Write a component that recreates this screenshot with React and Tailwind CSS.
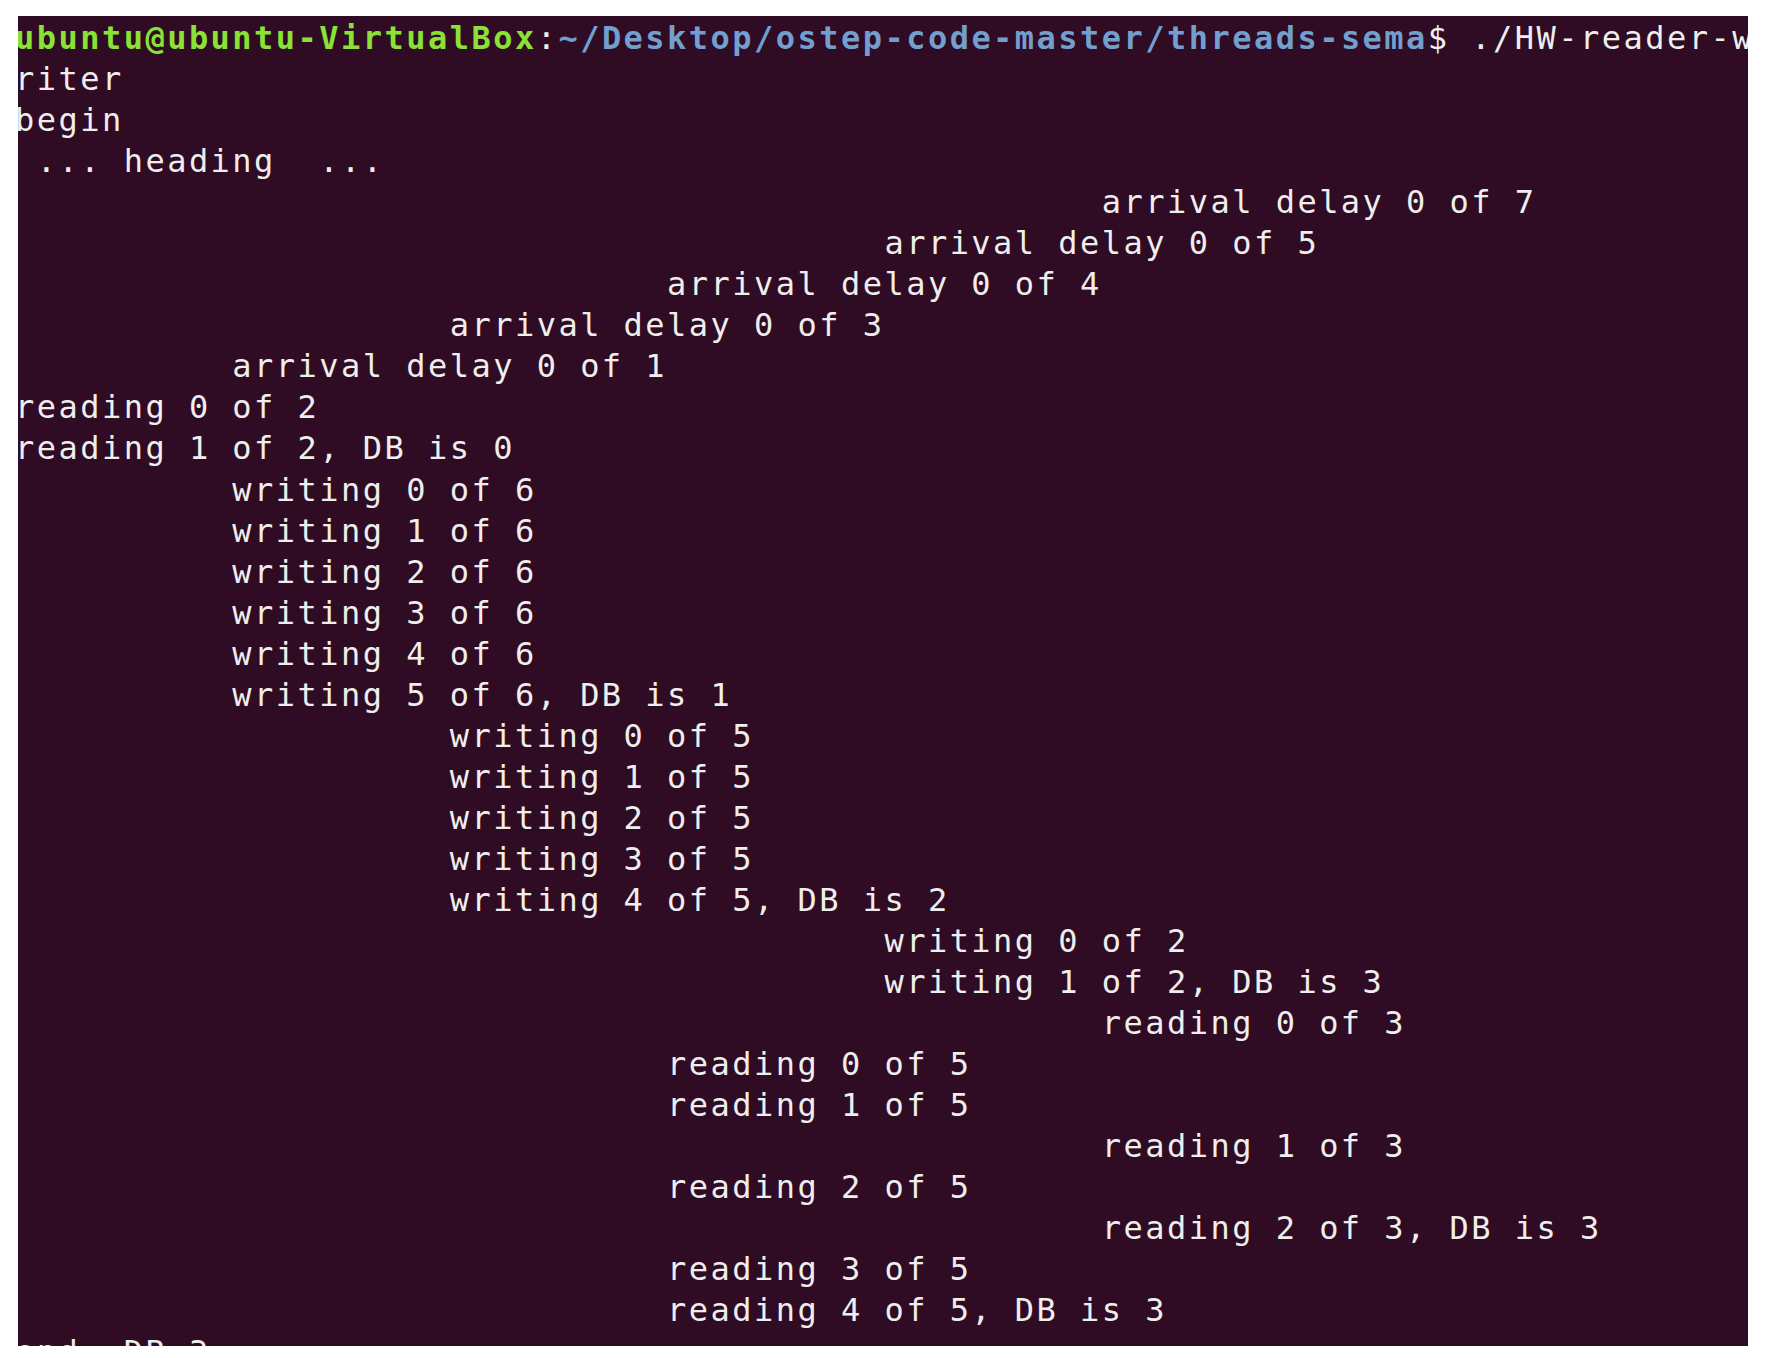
import React from 'react';

// Each output column of the reader/writer program is indented by 10 spaces.
const pad = (n) => ' '.repeat(n * 10);

const lines = [
  'riter',
  'begin',
  ' ... heading  ...',
  pad(5) + 'arrival delay 0 of 7',
  pad(4) + 'arrival delay 0 of 5',
  pad(3) + 'arrival delay 0 of 4',
  pad(2) + 'arrival delay 0 of 3',
  pad(1) + 'arrival delay 0 of 1',
  'reading 0 of 2',
  'reading 1 of 2, DB is 0',
  pad(1) + 'writing 0 of 6',
  pad(1) + 'writing 1 of 6',
  pad(1) + 'writing 2 of 6',
  pad(1) + 'writing 3 of 6',
  pad(1) + 'writing 4 of 6',
  pad(1) + 'writing 5 of 6, DB is 1',
  pad(2) + 'writing 0 of 5',
  pad(2) + 'writing 1 of 5',
  pad(2) + 'writing 2 of 5',
  pad(2) + 'writing 3 of 5',
  pad(2) + 'writing 4 of 5, DB is 2',
  pad(4) + 'writing 0 of 2',
  pad(4) + 'writing 1 of 2, DB is 3',
  pad(5) + 'reading 0 of 3',
  pad(3) + 'reading 0 of 5',
  pad(3) + 'reading 1 of 5',
  pad(5) + 'reading 1 of 3',
  pad(3) + 'reading 2 of 5',
  pad(5) + 'reading 2 of 3, DB is 3',
  pad(3) + 'reading 3 of 5',
  pad(3) + 'reading 4 of 5, DB is 3',
  'end: DB 3',
];

export default function App() {
  return (
    <div className="min-h-screen bg-white pl-[18px] pt-[16px]">
      <div className="w-[1730px] h-[1330px] bg-[#2f0b24] overflow-hidden">
        <pre
          className="-ml-[3px] pt-[2px] text-[32px] leading-[41.05px] tracking-[2.47px] text-[#eeeeec] whitespace-pre"
          style={{ fontFamily: '"DejaVu Sans Mono", "Liberation Mono", monospace' }}
        >
          <div>
            <span className="font-bold text-[#8ae234]">ubuntu@ubuntu-VirtualBox</span>
            <span>:</span>
            <span className="font-bold text-[#729fcf]">~/Desktop/ostep-code-master/threads-sema</span>
            <span>$ ./HW-reader-w</span>
          </div>
          {lines.map((line, i) => (
            <div key={i}>{line || ' '}</div>
          ))}
        </pre>
      </div>
    </div>
  );
}
